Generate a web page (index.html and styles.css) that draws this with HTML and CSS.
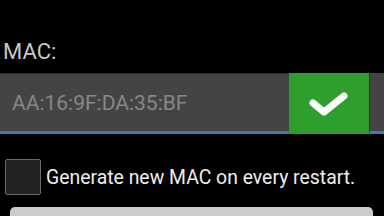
FILE: index.html
```html
<!DOCTYPE html>
<html lang="en">
<head>
    <meta charset="UTF-8">
    <meta name="viewport" content="width=device-width, initial-scale=1.0">
    <title>MAC</title>
    <link rel="stylesheet" href="styles.css">
</head>
<body>
    <div class="screen">
        <div class="label">MAC:</div>

        <!-- MAC input row -->
        <div class="mac-row">
            <div class="mac-input">AA:16:9F:DA:35:BF</div>
            <button class="ok-btn">
                <svg width="40" height="26" viewBox="0 0 40 26">
                    <path d="M4 12 L15 21 L35 5" fill="none" stroke="white" stroke-width="7" stroke-linecap="round" stroke-linejoin="round"/>
                </svg>
            </button>
            <div class="mac-extra"></div>
        </div>

        <label class="check-row">
            <span class="checkbox"></span>
            <span class="check-text">Generate new MAC on every restart.</span>
        </label>

        <div class="bottom-btn"></div>
    </div>
</body>
</html>
```

FILE: styles.css
```css
body {
    margin: 0;
    background-color: #000;
    font-family: Roboto, "Noto Sans", sans-serif;
    overflow: hidden;
}
.screen {
    display: flex;
    flex-direction: column;
    padding-top: 38px;
}
.label {
    color: #c8c8c8;
    font-size: 22px;
    line-height: 28px;
    padding-left: 3px;
}
.mac-row {
    display: flex;
    height: 61px;
    margin-top: 7px;
}
.mac-input {
    flex: 1;
    background-color: #444;
    border-top: 1px solid #2a2a2a;
    border-bottom: 3px solid #3a7db0;
    color: #878787;
    font-size: 21px;
    display: flex;
    align-items: center;
    padding-left: 12px;
}
.ok-btn {
    width: 80px;
    background-color: #2e9f2e;
    border: none;
    padding: 0;
    display: flex;
    align-items: center;
    justify-content: center;
}
.mac-extra {
    width: 14px;
    background-color: #444;
    border-left: 1px solid #333;
    border-bottom: 3px solid #3a7db0;
}
.check-row {
    display: flex;
    align-items: center;
    gap: 5px;
    margin-top: 25px;
    padding-left: 5px;
}
.checkbox {
    width: 34px;
    height: 34px;
    background-color: #222;
    border: 1px solid #6a6a6a;
    border-radius: 2px;
}
.check-text {
    color: #eee;
    font-size: 19.4px;
}
.bottom-btn {
    margin: 12px 11px 0 10px;
    height: 9px;
    background-color: #ccc;
    border-radius: 5px 5px 0 0;
}
```
